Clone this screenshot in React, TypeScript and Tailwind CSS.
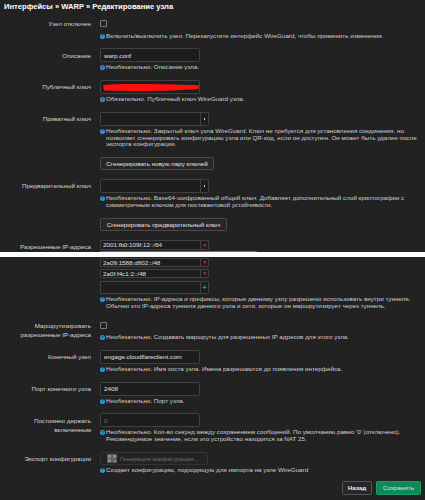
import React from 'react';

const HelpIcon = () => (
    <span className="mr-[1px] mt-[1px] flex h-[5px] w-[5px] shrink-0 items-center justify-center rounded-full bg-[#2e9bd9] text-[4px] font-bold leading-none text-[#10202c]">
        ?
    </span>
);

const Help = ({ lines }: { lines: string[] }) => (
    <div className="mt-[2px] flex text-[6.25px] leading-[6.7px] text-[#cfcfcf]">
        <HelpIcon />
        <div>
            {lines.map((line, i) => (
                <div key={i} className="whitespace-nowrap">{line}</div>
            ))}
        </div>
    </div>
);

const Row = ({ label, children }: { label: React.ReactNode; children: React.ReactNode }) => (
    <div className="grid grid-cols-[91px_1fr] gap-x-[9px]">
        <div className="pt-[2.3px] text-right text-[6.25px] leading-[9.3px] text-[#d4d4d4]">{label}</div>
        <div>{children}</div>
    </div>
);

const TextInput = ({ value, placeholder, children }: { value?: string; placeholder?: string; children?: React.ReactNode }) => (
    <div className="relative flex h-[14px] w-[100px] items-center rounded-[1.5px] border border-[#414141] bg-[#1d1d1d] px-[3px] text-[6.25px] text-[#e2e2e2]">
        {value}
        {placeholder && <span className="text-[#777]">{placeholder}</span>}
        {children}
    </div>
);

const KeyInput = () => (
    <div className="flex h-[14px] w-[109px] rounded-[1.5px] border border-[#414141] bg-[#1d1d1d]">
        <div className="flex-1" />
        <div className="flex w-[8px] items-center justify-center border-l border-[#414141]">
            <span className="h-[1.5px] w-[1.5px] bg-[#cfcfcf]" />
        </div>
    </div>
);

const ListItem = ({ value, kind, h }: { value?: string; kind: 'del' | 'add'; h: string }) => (
    <div className={`flex w-[109px] rounded-[1px] border border-[#414141] bg-[#1d1d1d] text-[6.25px] text-[#e2e2e2] ${h}`}>
        <div className="flex flex-1 items-center px-[2px]">{value}</div>
        <div className="flex w-[8px] items-center justify-center border-l border-[#414141]">
            {kind === 'del' ? (
                <span className="text-[6px] font-bold leading-none text-[#d23a3a]">×</span>
            ) : (
                <span className="text-[7px] font-bold leading-none text-[#2fa35f]">+</span>
            )}
        </div>
    </div>
);

const Checkbox = () => (
    <div className="flex h-[14px] items-center">
        <span className="h-[7px] w-[7px] rounded-[1px] border border-[#7a7a7a]" />
    </div>
);

const Btn = ({ children, w }: { children: React.ReactNode; w: string }) => (
    <div className={`flex items-center justify-center rounded-[1.5px] border border-[#4a4a4a] bg-[#262626] text-[6.25px] text-[#e4e4e4] ${w}`}>
        {children}
    </div>
);

export default function App() {
    return (
        <div className="relative min-h-[500px] w-[425px] overflow-hidden bg-[#222222] pr-[4px] pt-[2px] font-['Liberation_Sans',Arial,sans-serif]">
            <h2 className="pl-[4px] text-[7.6px] font-bold leading-[10px] text-white">
                Интерфейсы » WARP » Редактирование узла
            </h2>

            <div className="mt-[4.7px] flex flex-col gap-[9px]">
                <Row label="Узел отключен">
                    <Checkbox />
                    <Help lines={['Включить/выключить узел. Перезапустите интерфейс WireGuard, чтобы применить изменения.']} />
                </Row>

                <Row label="Описание">
                    <TextInput value="warp.conf" />
                    <Help lines={['Необязательно. Описание узла.']} />
                </Row>

                <Row label="Публичный ключ">
                    <TextInput>
                        <svg className="absolute left-[1px] top-[2px]" width="98" height="9" viewBox="0 0 98 9">
                            <path d="M1 2 C20 0.5 60 1 97 2.2 L96.5 6 C70 8 40 8.5 2 7.5 Z" fill="#ff1010" />
                        </svg>
                    </TextInput>
                    <Help lines={['Обязательно. Публичный ключ WireGuard узла.']} />
                </Row>

                <Row label="Приватный ключ">
                    <KeyInput />
                    <Help
                        lines={[
                            'Необязательно. Закрытый ключ узла WireGuard. Ключ не требуется для установления соединения, но',
                            'позволяет сгенерировать конфигурацию узла или QR-код, если он доступен. Он может быть удален после',
                            'экспорта конфигурации.',
                        ]}
                    />
                    <div className="mt-[9.5px] flex">
                        <Btn w="w-[114px] h-[12.5px]">Сгенерировать новую пару ключей</Btn>
                    </div>
                </Row>

                <Row label="Предварительный ключ">
                    <KeyInput />
                    <Help
                        lines={[
                            'Необязательно. Base64-шифрованный общий ключ. Добавляет дополнительный слой криптографии с',
                            'симметричным ключом для постквантовой устойчивости.',
                        ]}
                    />
                    <div className="mt-[9.5px] flex">
                        <Btn w="w-[127px] h-[13px]">Сгенерировать предварительный ключ</Btn>
                    </div>
                </Row>

                <Row label="Разрешенные IP-адреса">
                    <ListItem value="2001:fb0:109f:12::/64" kind="del" h="h-[10px]" />
                    <div className="mt-[8px]">
                        <ListItem value="2a09:1588:d802::/48" kind="del" h="h-[9px]" />
                    </div>
                    <div className="mt-[2px]">
                        <ListItem value="2a0f:f4c1:2::/48" kind="del" h="h-[9px]" />
                    </div>
                    <div className="mt-[3px]">
                        <ListItem kind="add" h="h-[13px]" />
                    </div>
                    <div className="mt-[2px]">
                        <Help
                            lines={[
                                'Необязательно. IP-адреса и префиксы, которые данному узлу разрешено использовать внутри туннеля.',
                                'Обычно это IP-адреса туннеля данного узла и сети, которые он маршрутизирует через туннель.',
                            ]}
                        />
                    </div>
                </Row>

                <Row label={<>Маршрутизировать<br />разрешенные IP-адреса</>}>
                    <Checkbox />
                    <Help lines={['Необязательно. Создавать маршруты для разрешенных IP адресов для этого узла.']} />
                </Row>

                <Row label="Конечный узел">
                    <TextInput value="engage.cloudflareclient.com" />
                    <Help lines={['Необязательно. Имя хоста узла. Имена разрешаются до появления интерфейса.']} />
                </Row>

                <Row label="Порт конечного узла">
                    <TextInput value="2408" />
                    <Help lines={['Необязательно. Порт узла.']} />
                </Row>

                <Row label={<>Постоянно держать<br />включенным</>}>
                    <TextInput placeholder="0" />
                    <Help
                        lines={[
                            "Необязательно. Кол-во секунд между сохранением сообщений. По умолчанию равно '0' (отключено).",
                            'Рекомендуемое значение, если это устройство находится за NAT 25.',
                        ]}
                    />
                </Row>

                <Row label="Экспорт конфигурации">
                    <div className="flex h-[13px] w-[108px] items-center gap-[3px] rounded-[1.5px] border border-[#343434] bg-[#232323] pl-[6px] text-[6.25px] text-[#707070]">
                        <svg width="10" height="9" viewBox="0 0 10 9">
                            <rect x="0" y="0" width="10" height="9" fill="#5a5a5a" />
                            <rect x="1" y="1" width="3" height="3" fill="#8a8a8a" />
                            <rect x="6" y="1" width="3" height="3" fill="#8a8a8a" />
                            <rect x="1" y="5" width="3" height="3" fill="#8a8a8a" />
                            <rect x="5" y="5" width="1" height="1" fill="#8a8a8a" />
                            <rect x="7" y="6" width="2" height="2" fill="#8a8a8a" />
                        </svg>
                        Генерация конфигурации...
                    </div>
                    <div className="mt-[0.6px]">
                        <Help lines={['Создает конфигурацию, подходящую для импорта на узле WireGuard']} />
                    </div>
                </Row>
            </div>

            <div className="mt-[8px] flex justify-end gap-[4px]">
                <div className="flex h-[13.4px] w-[30px] items-center justify-center rounded-[1.5px] border border-[#555] bg-[#262626] text-[6.25px] font-bold text-[#eeeeee]">
                    Назад
                </div>
                <div className="flex h-[13.4px] w-[45px] items-center justify-center rounded-[1.5px] border border-[#1c9c63] bg-[#11885a] text-[6.25px] text-[#c8efd9]">
                    Сохранить
                </div>
            </div>

            {/* screenshot seam over the allowed-ips list */}
            <div className="absolute left-[100px] top-[251px] h-[1px] w-[157px] bg-[#6a6a6a]" />
            <div className="absolute left-0 right-0 top-[252px] h-[5px] bg-white" />
        </div>
    );
}
